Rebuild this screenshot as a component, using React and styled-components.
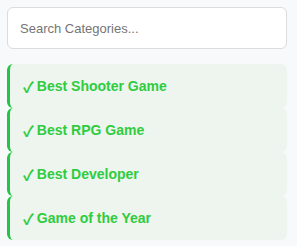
import React from "react";
import styled, { createGlobalStyle } from "styled-components";

const Global = createGlobalStyle`
  body {
    margin: 0;
    background: #f8f9fa;
    font-family: "Liberation Sans", Arial, sans-serif;
  }
`;

const Panel = styled.div`
  padding: 7px 10px 7px 7px;
  display: flex;
  flex-direction: column;
`;

const Search = styled.input`
  box-sizing: border-box;
  width: 100%;
  height: 42px;
  padding: 0 12px;
  border: 1px solid #dcdcdc;
  border-radius: 6px;
  background: #fff;
  font-family: inherit;
  font-size: 13px;
  color: #333;
  outline: none;
  margin-bottom: 15px;
  &::placeholder {
    color: #757575;
  }
`;

const List = styled.div`
  display: flex;
  flex-direction: column;
`;

const Item = styled.div`
  height: 44px;
  display: flex;
  align-items: center;
  padding-left: 13px;
  background: #eef5ee;
  border-left: 3px solid #22c546;
  border-radius: 6px;
  color: #2ecc40;
  font-weight: bold;
  font-size: 14px;
`;

const Check = styled.span`
  font-family: "Noto Sans CJK SC", sans-serif;
  font-size: 15px;
  line-height: 1;
  margin-right: 3px;
`;

const items = ["Best Shooter Game", "Best RPG Game", "Best Developer", "Game of the Year"];

export default function App() {
  return (
    <>
      <Global />
      <Panel>
        <Search placeholder="Search Categories..." />
        <List>
          {items.map(t => (
            <Item key={t}>
              <Check>✓</Check>
              {t}
            </Item>
          ))}
        </List>
      </Panel>
    </>
  );
}
